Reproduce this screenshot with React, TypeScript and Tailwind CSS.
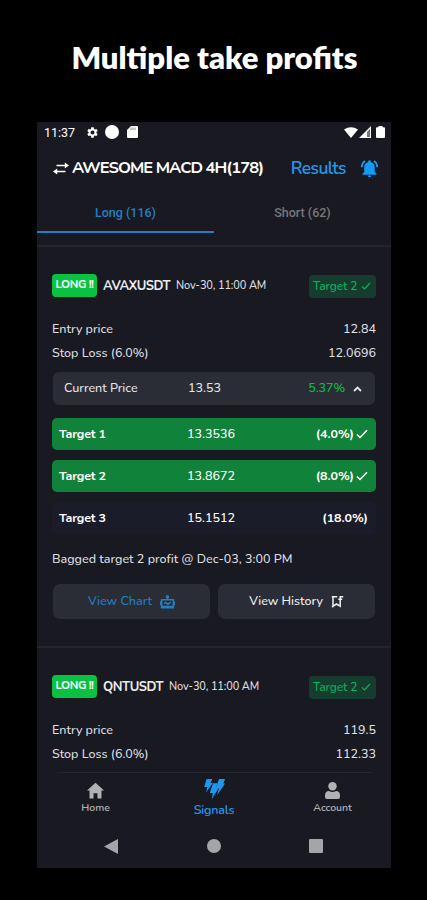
import React from "react";
import { IoMdHome } from "react-icons/io";
import { MdNotificationsActive, MdSettings } from "react-icons/md";

type Signal = {
  pair: string;
  date: string;
  entry: string;
  stop: string;
};

const signals: Signal[] = [
  { pair: "AVAXUSDT", date: "Nov-30, 11:00 AM", entry: "12.84", stop: "12.0696" },
  { pair: "QNTUSDT", date: "Nov-30, 11:00 AM", entry: "119.5", stop: "112.33" },
];

const targets = [
  { name: "Target 1", price: "13.3536", gain: "(4.0%)", hit: true },
  { name: "Target 2", price: "13.8672", gain: "(8.0%)", hit: true },
  { name: "Target 3", price: "15.1512", gain: "(18.0%)", hit: false },
];

const Check = ({ className }: { className: string }) => (
  <svg viewBox="0 0 12 10" className={className} fill="none" stroke="currentColor" strokeWidth="1.5">
    <path d="M1 5.5 4 8.5 11 1.2" />
  </svg>
);

const Swap = () => (
  <svg viewBox="0 0 16 13" className="h-[13px] w-4" fill="none" stroke="currentColor" strokeWidth="1.6">
    <path d="M3.5 3.5H13M3 9.5H12.5" />
    <path d="M11.8 0.4 16 3.5 11.8 6.6ZM4.2 6.4 0 9.5 4.2 12.6Z" fill="currentColor" stroke="none" />
  </svg>
);

const Bolts = () => (
  <svg viewBox="0 0 21 22" className="h-[22px] w-[21px]" fill="currentColor">
    <path d="M2.6 1H8.4L6.6 5H8.8L2 14.5 3.4 9H0.2Z" />
    <path d="M9 5.2H13.4L12.2 9.4H15L7.6 21.5 9 15H5.8Z" />
    <path d="M15 1H21L19.4 5.4H21L13.2 17 15 10H11.8Z" />
  </svg>
);

const ChartBot = () => (
  <svg viewBox="0 0 15 14" className="h-3.5 w-[15px]" fill="none" stroke="currentColor" strokeWidth="1.6">
    <path d="M1.6 4.8H13.4V12.6H1.6Z" />
    <path d="M7.5 5V2M0.6 6.5V10M14.4 6.5V10M2 11.6H13" />
    <path d="M4.2 8.8 5.6 7.4 8 9.4 10.8 7" strokeWidth="1.5" />
    <circle cx="7.5" cy="1.8" r="1.7" fill="currentColor" stroke="none" />
  </svg>
);

const HistoryMark = () => (
  <svg viewBox="0 0 13 13" className="h-[13px] w-[13px]" fill="none" stroke="currentColor" strokeWidth="1.5">
    <path d="M6.3 1.8H2V11.2L5.5 9 9.2 11.2V6.8" />
    <path d="M0.8 1.8H2M9.2 7V1.8H12.2M7.3 4.3H11.2M0.8 11.6H2.6" />
  </svg>
);

const StatusBar = () => (
  <div className="flex h-5 items-center pl-[7px] pr-[6px] text-white">
    <span className="w-[42px] pt-px font-[Roboto,sans-serif] text-[12.5px] leading-5">11:37</span>
    <MdSettings className="h-[13px] w-[13px]" />
    <span className="ml-[6px] h-[14px] w-[14px] rounded-full bg-white" />
    <svg viewBox="0 0 11 12" className="ml-2 h-3 w-[11px]" fill="currentColor">
      <path d="M4 0H10Q11 0 11 1V11Q11 12 10 12H1Q0 12 0 11V4Z" />
      <path d="M4 1.5V4M6 1.5V4M8 1.5V4" stroke="#777" strokeWidth="0.8" />
    </svg>
    <div className="ml-auto flex items-center">
      <svg viewBox="0 0 14 11" className="h-[11px] w-3.5" fill="currentColor">
        <path d="M0 2.5Q7-2 14 2.5L7 11Z" />
      </svg>
      <svg viewBox="0 0 12 12" className="ml-px h-3 w-3" fill="currentColor">
        <path d="M0 12 12 0V12ZM8 6V11H11V2.8Z" fillRule="evenodd" />
        <path d="M8 5 11 2V11H8Z" opacity="0.4" />
      </svg>
      <svg viewBox="0 0 9 12" className="ml-[5px] h-3 w-[9px]" fill="currentColor">
        <path d="M2.5 0H6.5V1.3H8Q9 1.3 9 2.3V11Q9 12 8 12H1Q0 12 0 11V2.3Q0 1.3 1 1.3H2.5Z" />
      </svg>
    </div>
  </div>
);

const Row = ({ label, value }: { label: string; value: string }) => (
  <div className="flex h-6 items-center justify-between text-[12.5px] font-medium text-[#dedee1]">
    <span>{label}</span>
    <span>{value}</span>
  </div>
);

const CardHead = ({ signal }: { signal: Signal }) => (
  <div className="flex h-6 items-center">
    <span className="flex h-[23px] w-[45px] items-center justify-center rounded-[4px] bg-[#0bc143] text-[11.5px] font-bold tracking-[-0.4px] text-white">
      LONG !!
    </span>
    <span className="ml-[6px] mt-[3px] whitespace-nowrap text-[13px] font-bold tracking-[-0.45px] text-[#ececee]">
      {signal.pair}
    </span>
    <span className="ml-[6px] mt-[3px] whitespace-nowrap text-[11px] font-medium tracking-[-0.15px] text-[#dedee1]">
      {signal.date}
    </span>
    <span className="ml-auto mt-[2px] flex h-[23px] w-[67px] items-center justify-between rounded-[4px] bg-[#163c30] pl-1 pr-[5px] text-[12px] font-medium tracking-[-0.1px] text-[#09b45a]">
      Target 2
      <Check className="h-2 w-2.5" />
    </span>
  </div>
);

const App = () => {
  return (
    <div className="flex h-[900px] w-[427px] flex-col items-center bg-black font-[Nunito,Lato,sans-serif]">
      <h1 className="flex h-[122px] items-center whitespace-nowrap pb-[7px] pl-[2px] font-[Lato,sans-serif] text-[31px] font-extrabold text-white">
        Multiple take profits
      </h1>

      <div className="mr-[-1px] flex h-[746px] w-[354px] flex-col bg-[#191a21]">
        <StatusBar />

        <header className="flex h-[52px] items-center pl-4 pr-[11px] text-white">
          <Swap />
          <span className="ml-[3px] mt-px whitespace-nowrap text-[16.5px] font-bold tracking-[-0.95px]">
            AWESOME MACD 4H(178)
          </span>
          <span className="ml-auto text-[17.5px] font-semibold tracking-[-0.6px] text-[#2597eb]">Results</span>
          <MdNotificationsActive className="ml-[13px] h-[21px] w-[21px] text-[#149cf5]" />
        </header>

        <nav className="flex h-[39px] shrink-0 font-[Roboto,sans-serif] text-[12.5px] font-medium">
          <div className="flex flex-1 justify-center border-b-2 border-[#237fc0] pt-[10px] leading-[18px] text-[#237fc0]">
            Long (116)
          </div>
          <div className="flex flex-1 justify-center pt-[10px] leading-[18px] text-[#77777c]">Short (62)</div>
        </nav>

        <section className="mt-3 h-[401px] shrink-0 border-t-2 border-[#24252b] px-[15px] pt-[26px]">
          <CardHead signal={signals[0]} />
          <div className="pt-5">
            <Row label="Entry price" value={signals[0].entry} />
            <Row label="Stop Loss (6.0%)" value={signals[0].stop} />
          </div>

          <div className="mx-px mt-[7px] flex h-[33px] items-center rounded-[6px] bg-[#2a2d35] pl-[11px] pr-[13px] text-[12.5px] font-medium text-[#e4e4e6]">
            <span className="w-[124px]">Current Price</span>
            <span>13.53</span>
            <span className="ml-auto font-semibold tracking-[-0.1px] text-[#0cb83f]">5.37%</span>
            <svg viewBox="0 0 9 6" className="ml-[8px] h-1.5 w-[9px]" fill="none" stroke="currentColor" strokeWidth="1.8">
              <path d="M1 5 4.5 1.5 8 5" />
            </svg>
          </div>

          <div className="mt-[13px] flex flex-col gap-[10px]">
            {targets.map((target) => (
              <div
                key={target.name}
                className={`flex h-8 items-center rounded-[5px] pl-[7px] pr-2 text-[12.5px] font-medium text-white ${
                  target.hit ? "bg-[#10823a]" : "bg-[#1a1c29]"
                }`}
              >
                <span className="w-[128px] font-bold tracking-[-0.2px]">{target.name}</span>
                <span>{target.price}</span>
                <span className="ml-auto font-bold tracking-[-0.1px]">{target.gain}</span>
                {target.hit && <Check className="ml-0.5 h-2.5 w-3" />}
              </div>
            ))}
          </div>

          <p className="mt-4 whitespace-nowrap text-[12.5px] font-medium leading-[18px] tracking-[0.02px] text-[#dedee1]">
            Bagged target 2 profit @ Dec-03, 3:00 PM
          </p>

          <div className="mx-px mt-4 flex gap-2 text-[12.5px] font-medium">
            <div className="flex h-[35px] flex-1 items-center justify-center gap-2 rounded-[7px] bg-[#2a2d35] text-[#237fc0]">
              View Chart
              <ChartBot />
            </div>
            <div className="flex h-[35px] flex-1 items-center justify-center gap-2 rounded-[7px] bg-[#2a2d35] text-[#f0f0f2]">
              View History
              <HistoryMark />
            </div>
          </div>
        </section>

        <section className="h-[126px] shrink-0 border-t-2 border-[#24252b] px-[15px] pt-[26px]">
          <CardHead signal={signals[1]} />
          <div className="pt-5">
            <Row label="Entry price" value={signals[1].entry} />
            <Row label="Stop Loss (6.0%)" value={signals[1].stop} />
          </div>
        </section>

        <footer className="mx-5 flex h-[54px] shrink-0 border-t border-[#26272d] text-[10.5px] font-semibold leading-[14px] text-[#b1b1b4]">
          <div className="flex w-[77px] flex-col items-center pt-[7px]">
            <IoMdHome className="h-[21px] w-[21px]" />
            <span>Home</span>
          </div>
          <div className="flex flex-1 flex-col items-center pt-[5px] text-[12.5px] text-[#1c98f1]">
            <Bolts />
            <span className="mt-[3px] tracking-[-0.2px]">Signals</span>
          </div>
          <div className="flex w-[77px] flex-col items-center pt-[9px]">
            <svg viewBox="0 0 15 17" className="h-[17px] w-[15px]" fill="currentColor">
              <circle cx="7.5" cy="4.2" r="4.2" />
              <path d="M4 9Q7.5 11 11 9Q15 9 15 13.5V15Q15 17 13 17H2Q0 17 0 15V13.5Q0 9 4 9Z" />
            </svg>
            <span className="mt-[2px] tracking-[-0.1px]">Account</span>
          </div>
        </footer>

        <div className="flex h-[42px] items-center justify-between pb-[2px] pl-[67px] pr-[68px] text-[#a5a5a8]">
          <svg viewBox="0 0 14 15" className="h-[15px] w-3.5" fill="currentColor">
            <path d="M14 0V15L0 7.5Z" />
          </svg>
          <span className="h-3.5 w-3.5 rounded-full bg-[#a5a5a8]" />
          <span className="h-[14px] w-[14px] rounded-[1px] bg-[#a5a5a8]" />
        </div>
      </div>
    </div>
  );
};

export default App;
